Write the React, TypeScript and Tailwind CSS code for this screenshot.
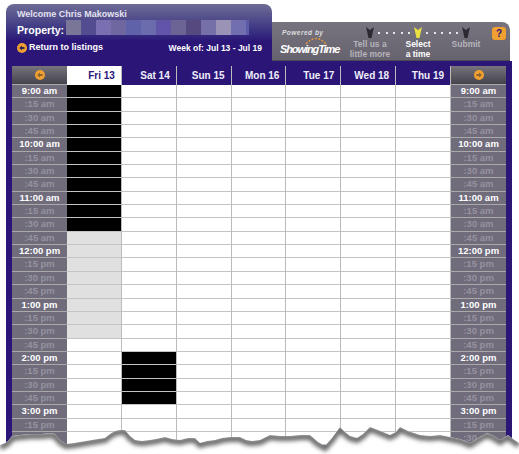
const days = ['Fri 13', 'Sat 14', 'Sun 15', 'Mon 16', 'Tue 17', 'Wed 18', 'Thu 19']

const hours = ['9:00 am', '10:00 am', '11:00 am', '12:00 pm', '1:00 pm', '2:00 pm', '3:00 pm']

const rows: { label: string; major: boolean }[] = []
hours.forEach((h) => {
  const suffix = h.slice(-2)
  rows.push({ label: h, major: true })
  rows.push({ label: `:15 ${suffix}`, major: false })
  rows.push({ label: `:30 ${suffix}`, major: false })
  rows.push({ label: `:45 ${suffix}`, major: false })
})
// the page is torn off just after 3:30 pm
rows.pop()

// blurred out address in the header
const blurBlocks = [
  'bg-[#7a7698]',
  'bg-[#544c90]',
  'bg-[#7a6fb0]',
  'bg-[#6f68a0]',
  'bg-[#5f62a8]',
  'bg-[#6a6cae]',
  'bg-[#6254a8]',
  'bg-[#6d6496]',
  'bg-[#55497f]',
  'bg-[#7670a8]',
  'bg-[#9b93b5]',
  'bg-[#726fb0]',
  'bg-[#5c5ca8]',
]

// torn paper edge, y is relative to the svg top
const tornEdge =
  'M0 20 L5 18 L8 16 L12 11 L20 10 L30 9 L42 9 L50 8 L55 9 L60 15 L66 19 L74 18 L80 17 L86 16 L92 15 L98 14 L105 13 L110 9 L115 6 L120 5 L125 5 L130 11 L135 15 L142 16 L150 15 L156 14 L165 12 L172 14 L180 15 L188 13 L195 13 L200 18 L207 16 L215 15 L222 13 L230 12 L240 12 L246 15 L252 16 L260 15 L266 12 L270 10 L280 11 L290 11 L300 10 L310 10 L318 17 L325 21 L332 13 L340 2 L345 7 L350 11 L357 13 L363 9 L370 2 L378 5 L390 10 L396 7 L400 2 L408 6 L420 10 L430 11 L440 10 L450 12 L460 14 L470 18 L478 13 L487 8 L494 11 L500 15 L505 12 L508 10 L513 14 L519 18'

function cellColor(day: number, row: number) {
  if (day === 0 && row < 11) return 'bg-black'
  if (day === 0 && row >= 11 && row < 19) return 'bg-[#e0e0e0]'
  if (day === 1 && row >= 20 && row < 24) return 'bg-black'
  return 'bg-white'
}

function TimeCell({ label, major }: { label: string; major: boolean }) {
  return (
    <div
      className={`h-[13.35px] border-b border-[#a9a9a9] bg-[#706c7c] text-center text-[9.5px] leading-[12px] font-bold ${
        major ? 'text-white' : 'text-[#96939f]'
      }`}
    >
      {label}
    </div>
  )
}

function ArrowDot({ dir, color = '#8a6430' }: { dir: 'left' | 'right'; color?: string }) {
  return (
    <svg width="10" height="10" viewBox="0 0 12 12">
      <circle cx="6" cy="6" r="6" fill="#f0a030" />
      {dir === 'left' ? (
        <path d="M2.5 6 L6 3 V4.8 H9 V7.2 H6 V9 Z" fill={color} />
      ) : (
        <path d="M9.5 6 L6 3 V4.8 H3 V7.2 H6 V9 Z" fill={color} />
      )}
    </svg>
  )
}

function StepMark({ active }: { active?: boolean }) {
  return (
    <svg width="8" height="11" viewBox="0 0 8 11" className="shrink-0">
      <path d="M0 0 L4 3 L8 0 L5.5 11 H2.5 Z" fill={active ? '#e8e040' : '#2c2a30'} />
    </svg>
  )
}

function Dots() {
  return (
    <div className="flex flex-1 justify-between px-[4px]">
      {[0, 1, 2, 3, 4].map((i) => (
        <span key={i} className="h-[2px] w-[2px] bg-[#e8e8e8]" />
      ))}
    </div>
  )
}

export default function App() {
  return (
    <div className="relative h-[454px] w-[519px] overflow-hidden bg-white font-['Liberation_Sans',Arial,sans-serif]">
      <div className="flex h-[61px] pl-[6px] pt-[4px]">
        <div className="flex h-[57px] w-[266px] flex-col rounded-t-[8px] bg-gradient-to-b from-[#6f6c96] to-[#2b1678] to-65% pl-[11px] pr-[10px] pt-[5px] text-white">
          <div className="text-[9px] leading-[11px] font-bold text-[#e4e2f0]">Welcome Chris Makowski</div>
          <div className="flex h-[18px]">
            <span className="self-end text-[10.6px] leading-[15px] font-bold">Property:</span>
            <div className="ml-[2px] flex h-[15px] w-[183px] overflow-hidden">
              {blurBlocks.map((c, i) => (
                <span key={i} className={`h-full w-[15px] shrink-0 ${c}`} />
              ))}
            </div>
          </div>
          <div className="mt-[4px] flex h-[12px] items-center">
            <ArrowDot dir="left" color="#33264f" />
            <span className="ml-[2px] text-[9px] font-bold">Return to listings</span>
            <span className="ml-auto text-[8.5px] font-bold">Week of: Jul 13 - Jul 19</span>
          </div>
        </div>
        <div className="mt-[18px] flex h-[39px] w-[238px] rounded-tr-[8px] border-b border-[#4c4a52] bg-gradient-to-b from-[#77737f] to-[#66626e] text-[#b6b4bb]">
          <div className="w-[74px] pl-[10px] pt-[7px]">
            <div className="text-[6.5px] leading-[8px] font-bold italic tracking-[0.5px] text-[#dddddd]">Powered by</div>
            <div className="relative -ml-[2px] mt-[6px] text-[11px] leading-[13px] font-bold italic tracking-[-1.1px] text-white">
              ShowingTime
              <svg className="absolute left-[25px] -top-[7px]" width="22" height="9" viewBox="0 0 22 9">
                <path d="M1 8 Q11 -3 21 8" fill="none" stroke="#e8963a" strokeWidth="1.4" strokeDasharray="2 1.5" />
              </svg>
            </div>
          </div>
          <div className="flex w-[144px] flex-col pt-[5px]">
            <div className="flex items-center px-[20px]">
              <StepMark />
              <Dots />
              <StepMark active />
              <Dots />
              <StepMark />
            </div>
            <div className="mt-[2px] grid grid-cols-3 text-center text-[8.5px] leading-[9.5px] font-bold">
              <span>
                Tell us a
                <br />
                little more
              </span>
              <span className="text-white">
                Select
                <br />a time
              </span>
              <span>Submit</span>
            </div>
          </div>
          <div className="ml-[2px] mt-[5px] flex h-[13px] w-[14px] items-center justify-center rounded-[3px] bg-[#f0a030] text-[10px] font-bold text-[#2b1678]">
            ?
          </div>
        </div>
      </div>

      <div className="ml-[6px] h-[393px] w-[506px] bg-[#2b1678] px-[6px] pt-[5px]">
        <div className="flex">
          <div className="w-[55px]">
            <div className="flex h-[19px] items-center justify-center border-b border-[#a9a9a9] bg-gradient-to-b from-[#77747e] to-[#45434b]">
              <ArrowDot dir="left" />
            </div>
            {rows.map((r) => (
              <TimeCell key={r.label} label={r.label} major={r.major} />
            ))}
          </div>
          {days.map((d, i) => (
            <div key={d} className="flex-1 border-r border-[#bbbbbb] last:border-r-0">
              <div
                className={`h-[19px] pr-[6px] text-right text-[10px] leading-[19px] font-bold ${
                  i === 0 ? 'bg-white text-[#2b1678]' : 'bg-[#2b1678] text-[#eeeef8]'
                }`}
              >
                {d}
              </div>
              {rows.map((r, j) => (
                <div key={r.label} className={`h-[13.35px] border-b border-[#c4c4c4] ${cellColor(i, j)}`} />
              ))}
            </div>
          ))}
          <div className="w-[55px]">
            <div className="flex h-[19px] items-center justify-center border-b border-[#a9a9a9] bg-gradient-to-b from-[#77747e] to-[#45434b]">
              <ArrowDot dir="right" />
            </div>
            {rows.map((r) => (
              <TimeCell key={r.label} label={r.label} major={r.major} />
            ))}
          </div>
        </div>
      </div>

      <svg className="absolute left-0 top-[425px]" width="519" height="29" viewBox="0 0 519 29">
        <defs>
          <clipPath id="paper">
            <path d={`${tornEdge} V29 H0 Z`} />
          </clipPath>
          <filter id="soft" x="-5%" y="-100%" width="110%" height="300%">
            <feGaussianBlur stdDeviation="2" />
          </filter>
        </defs>
        <path d={`${tornEdge} V29 H0 Z`} fill="#ffffff" />
        <g clipPath="url(#paper)">
          <path d={tornEdge} transform="translate(0 2)" fill="none" stroke="#666666" strokeWidth="6" filter="url(#soft)" />
        </g>
      </svg>
    </div>
  )
}
